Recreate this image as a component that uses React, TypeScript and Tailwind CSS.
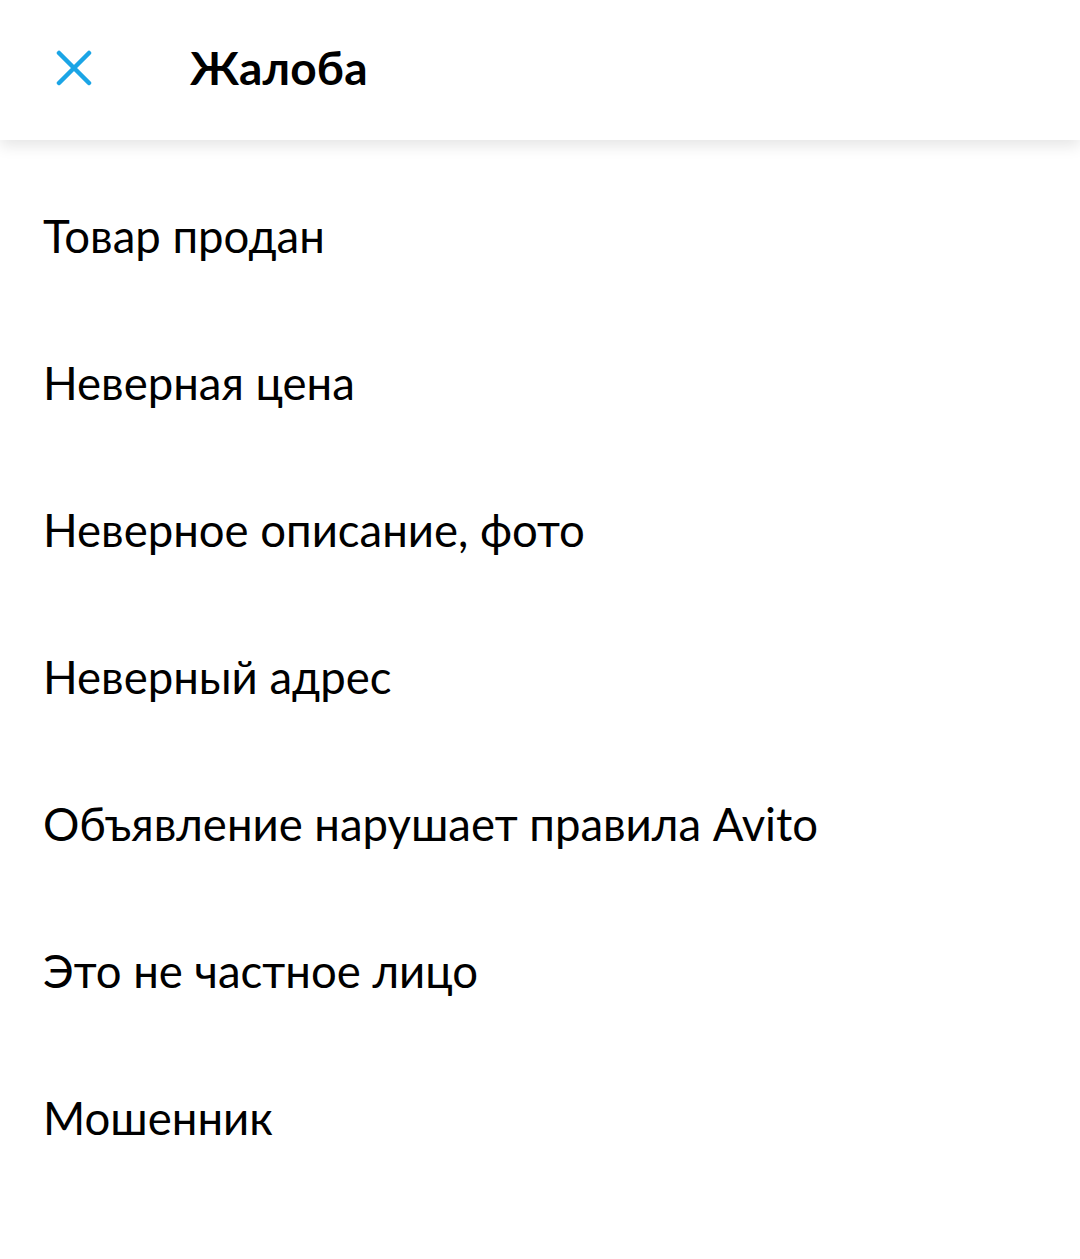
const ITEMS = [
  "Товар продан",
  "Неверная цена",
  "Неверное описание, фото",
  "Неверный адрес",
  "Объявление нарушает правила Avito",
  "Это не частное лицо",
  "Мошенник",
];

export default function App() {
  return (
    <div className="w-[1080px] h-[1259px] bg-white font-['Lato','Noto_Sans',sans-serif] text-black overflow-hidden">
      <div className="relative z-10 flex items-center h-[140px] pb-[5px] bg-white shadow-[0_6px_14px_rgba(0,0,0,0.1)]">
        <button className="ml-[55px] w-[38px] h-[38px] flex items-center justify-center">
          <svg width="36" height="36" viewBox="0 0 36 36" fill="none">
            <path d="M3 3 L33 33 M33 3 L3 33" stroke="#1ba5e6" strokeWidth="4.5" strokeLinecap="round" />
          </svg>
        </button>
        <h1 className="ml-[97px] text-[46px] font-bold leading-none tracking-[0.2px]">Жалоба</h1>
      </div>
      <ul className="flex flex-col">
        {ITEMS.map((item) => (
          <li key={item} className="h-[147px] flex items-center pl-[43px] pt-[44px] text-[45.5px] leading-none">
            {item}
          </li>
        ))}
      </ul>
    </div>
  );
}
